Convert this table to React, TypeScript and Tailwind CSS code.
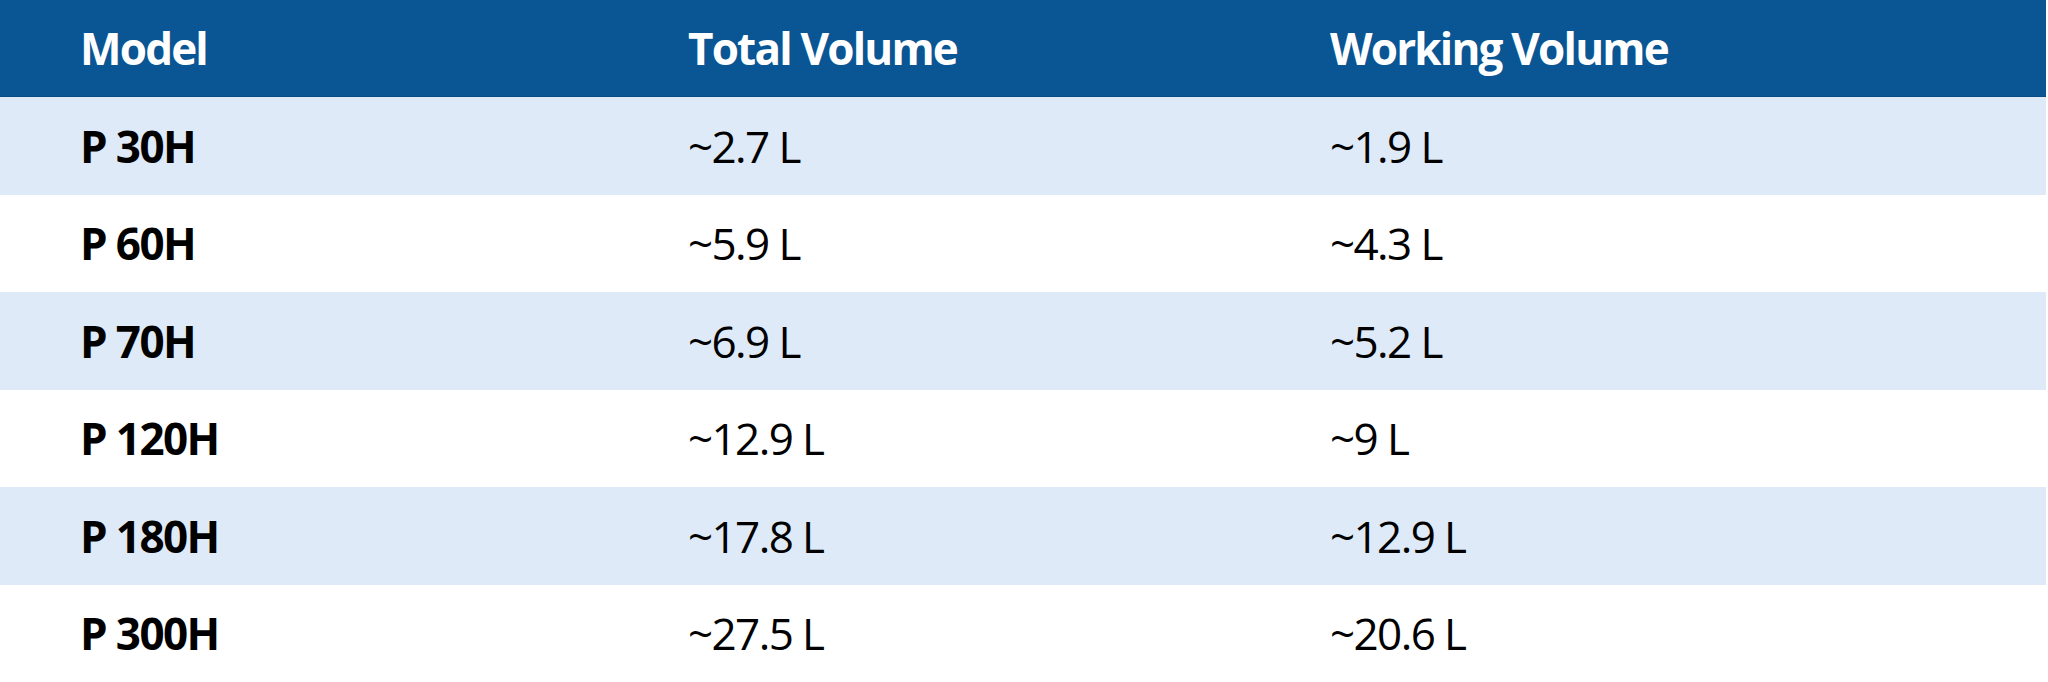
const rows = [
  { model: 'P 30H', total: '~2.7 L', working: '~1.9 L' },
  { model: 'P 60H', total: '~5.9 L', working: '~4.3 L' },
  { model: 'P 70H', total: '~6.9 L', working: '~5.2 L' },
  { model: 'P 120H', total: '~12.9 L', working: '~9 L' },
  { model: 'P 180H', total: '~17.8 L', working: '~12.9 L' },
  { model: 'P 300H', total: '~27.5 L', working: '~20.6 L' },
];

const App = () => {
  return (
    <div
      className="w-[2048px] h-[682px] bg-white"
      style={{ fontFamily: '"Open Sans", "Noto Sans", sans-serif' }}
    >
      <div className="w-[2046px] flex flex-col">
        <div className="grid grid-cols-[608px_642px_1fr] items-center h-[97px] pl-[80px] bg-[#0a5594] border-b border-[#084b85] text-white text-[44px] leading-none font-bold tracking-[-1.8px]">
          <div>Model</div>
          <div>Total Volume</div>
          <div>Working Volume</div>
        </div>
        {rows.map((row, index) => (
          <div
            key={row.model}
            className={
              index % 2 === 0
                ? 'grid grid-cols-[608px_642px_1fr] items-center h-[97.5px] pl-[80px] bg-[#deeaf7] text-black text-[44px] leading-none tracking-[-1.6px]'
                : 'grid grid-cols-[608px_642px_1fr] items-center h-[97.5px] pl-[80px] bg-white text-black text-[44px] leading-none tracking-[-1.6px]'
            }
          >
            <div className="font-bold">{row.model}</div>
            <div>{row.total}</div>
            <div>{row.working}</div>
          </div>
        ))}
      </div>
    </div>
  );
};

export default App;
